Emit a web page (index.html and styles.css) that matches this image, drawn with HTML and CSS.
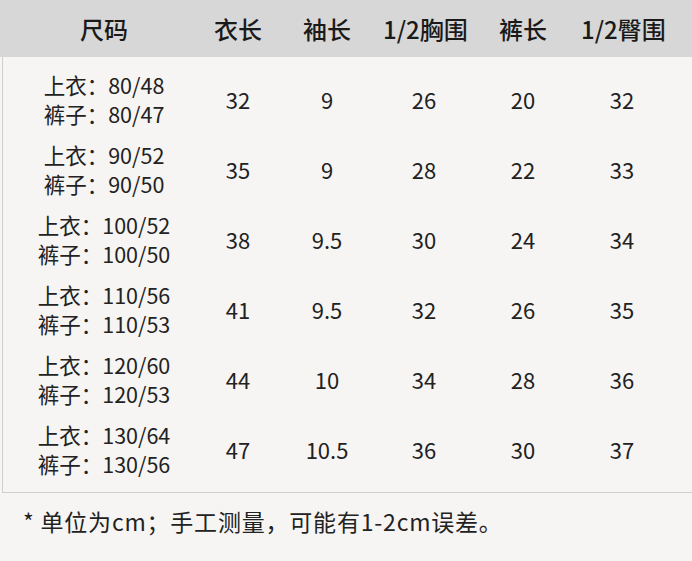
FILE: index.html
```html
<!DOCTYPE html>
<html lang="zh">
<head>
<meta charset="utf-8">
<link rel="stylesheet" href="styles.css">
</head>
<body>
<div class="page">
  <div class="table">
    <div class="row head">
      <div class="cell">尺码</div>
      <div class="cell">衣长</div>
      <div class="cell">袖长</div>
      <div class="cell">1/2胸围</div>
      <div class="cell">裤长</div>
      <div class="cell">1/2臀围</div>
    </div>
    <div class="body">
      <div class="row"><div class="cell size">上衣：80/48<br>裤子：80/47</div><div class="cell">32</div><div class="cell">9</div><div class="cell">26</div><div class="cell">20</div><div class="cell">32</div></div>
      <div class="row"><div class="cell size">上衣：90/52<br>裤子：90/50</div><div class="cell">35</div><div class="cell">9</div><div class="cell">28</div><div class="cell">22</div><div class="cell">33</div></div>
      <div class="row"><div class="cell size">上衣：100/52<br>裤子：100/50</div><div class="cell">38</div><div class="cell">9.5</div><div class="cell">30</div><div class="cell">24</div><div class="cell">34</div></div>
      <div class="row"><div class="cell size">上衣：110/56<br>裤子：110/53</div><div class="cell">41</div><div class="cell">9.5</div><div class="cell">32</div><div class="cell">26</div><div class="cell">35</div></div>
      <div class="row"><div class="cell size">上衣：120/60<br>裤子：120/53</div><div class="cell">44</div><div class="cell">10</div><div class="cell">34</div><div class="cell">28</div><div class="cell">36</div></div>
      <div class="row"><div class="cell size">上衣：130/64<br>裤子：130/56</div><div class="cell">47</div><div class="cell">10.5</div><div class="cell">36</div><div class="cell">30</div><div class="cell">37</div></div>
    </div>
  </div>
  <div class="note">* 单位为cm；手工测量，可能有1-2cm误差。</div>
</div>
</body>
</html>
```

FILE: styles.css
```css
html, body {
  margin: 0;
  padding: 0;
}
body {
  width: 692px;
  height: 561px;
  overflow: hidden;
  background: #f6f5f3;
  font-family: "Noto Sans CJK SC", "Noto Sans", sans-serif;
  color: #222;
}
.page {
  width: 692px;
  height: 561px;
}
.table {
  border-left: 1px solid #cfcfcf;
  border-bottom: 1px solid #cfcfcf;
  margin-left: 2px;
}
.row {
  display: grid;
  grid-template-columns: 202px 66px 112px 82px 116px 82px 30px;
  align-items: center;
  height: 70px;
}
.row.head {
  height: 57px;
  background: #d7d7d7;
  font-weight: 500;
  color: #1a1a1a;
  margin-left: -3px;
  padding-left: 3px;
}
.cell {
  text-align: center;
  font-size: 22px;
  line-height: 30px;
  white-space: nowrap;
}
.cell.size {
  font-size: 21.5px;
  line-height: 29px;
}
.head .cell {
  font-size: 24px;
}
.body {
  padding: 7px 0 8px;
}
.note {
  font-size: 23px;
  line-height: 30px;
  letter-spacing: 0.8px;
  padding: 13px 0 0 23px;
  color: #222;
}
```
